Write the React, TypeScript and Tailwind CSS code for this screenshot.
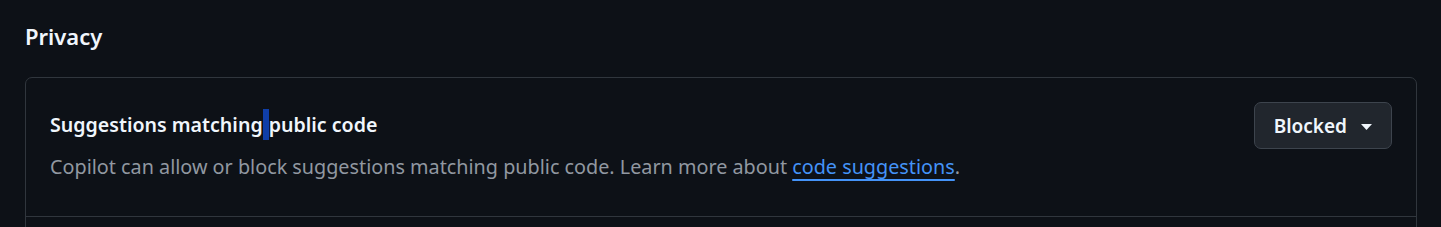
export default function App() {
  return (
    <div
      className="min-h-screen bg-[#0d1117] pl-[25px] pr-[24px] pt-[20px]"
      style={{ fontFamily: '"Noto Sans", "Open Sans", sans-serif' }}
    >
      <h2 className="text-[22px] font-semibold leading-[32px] text-[#f0f6fc]">Privacy</h2>

      <div className="mt-[25px] rounded-[7px] border border-[#30363d]">
        {/* Suggestions matching public code */}
        <div className="flex items-start justify-between border-b border-[#30363d] pl-[24px] pr-[24px] pt-[24px] pb-[34px]">
          <div>
            <div className="mt-[7px] text-[19.6px] font-semibold leading-[31px] text-[#f0f6fc]">
              Suggestions matching
              <span className="inline-block h-[31px] w-[6px] bg-[#0f3ea8] align-top" />
              public code
            </div>
            <p className="mt-[12px] text-[19.8px] leading-[30px] text-[#9198a1]">
              Copilot can allow or block suggestions matching public code. Learn more about{' '}
              <a href="#" className="text-[#4493f8] underline underline-offset-[5px] decoration-[2px]">
                code suggestions
              </a>
              .
            </p>
          </div>
          <button
            type="button"
            className="flex h-[47px] items-center gap-[14px] rounded-[7px] border border-[#3d444d] bg-[#21262d] pl-[19px] pr-[19px] pt-[2px] text-[19px] font-semibold text-[#f0f6fc]"
          >
            Blocked
            <svg width="11" height="6" viewBox="0 0 11 6" fill="#f0f6fc">
              <path d="M0 0h11L5.5 6z" />
            </svg>
          </button>
        </div>
        <div className="h-[80px]" />
      </div>
    </div>
  )
}
